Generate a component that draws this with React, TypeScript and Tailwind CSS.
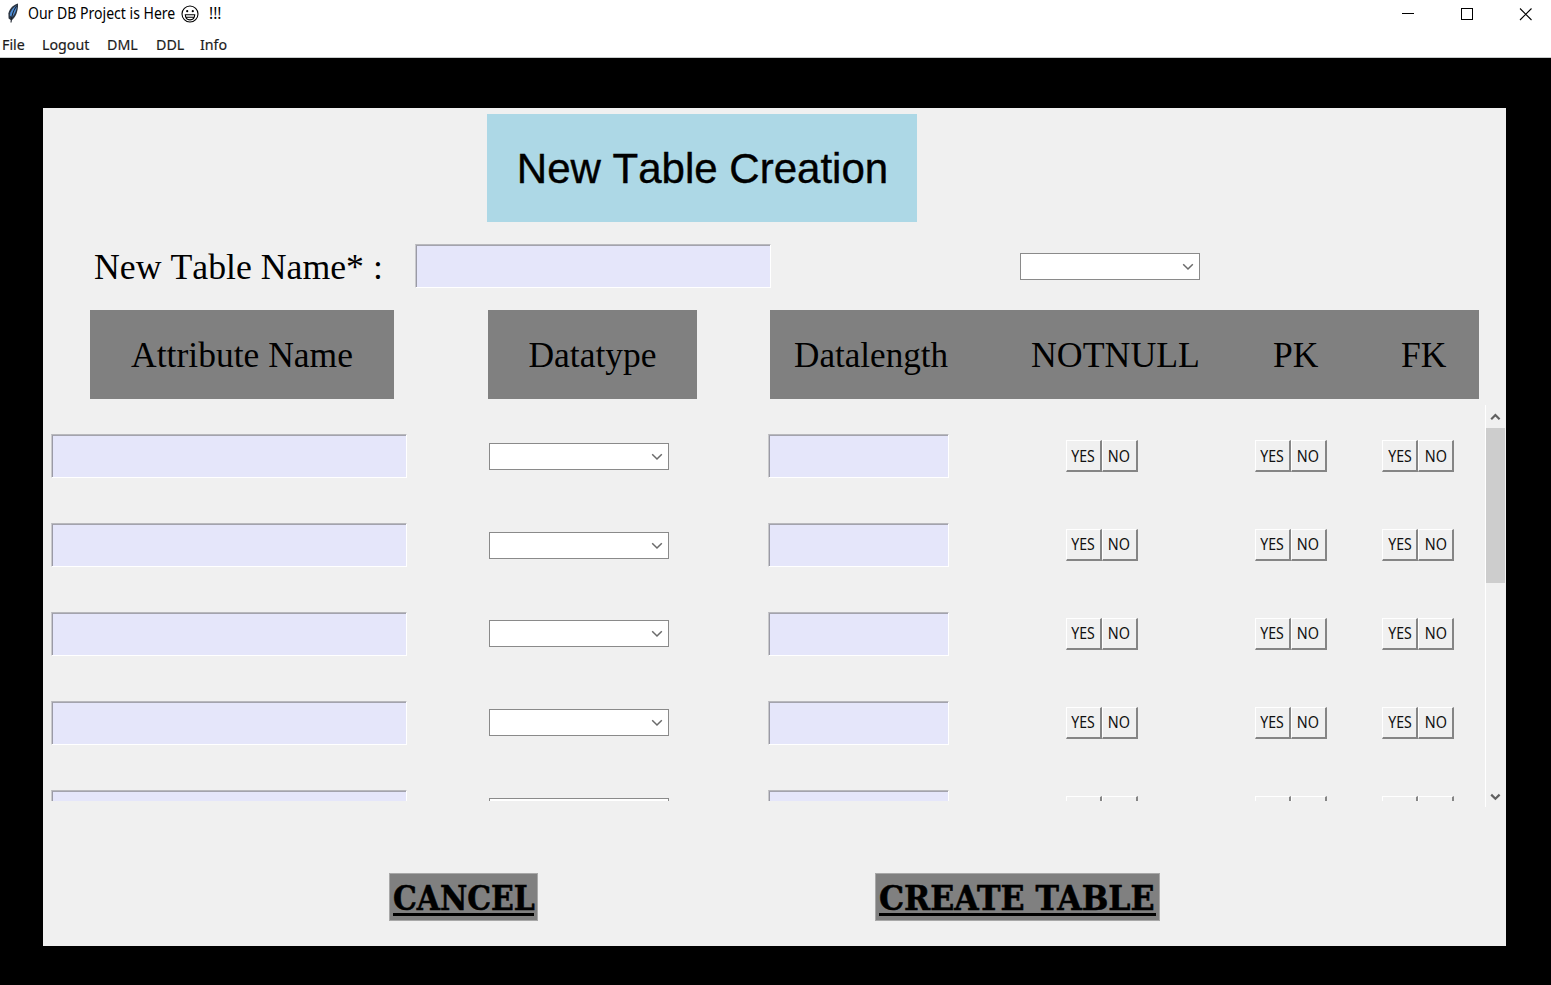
import React from "react";

function Feather() {
  return (
    <svg width="12" height="20" viewBox="0 0 12 20" className="shrink-0">
      <path d="M11 0.5C7 1.5 2.5 5 1.4 10.5L1.6 15.5L4.4 17.5C8.4 14.5 11.4 8.5 11 0.5Z" fill="#2b3440" />
      <path d="M9.8 2.5C6 4.5 3.2 8 2.8 12.5L5 14.2C8 11 9.8 7 9.8 2.5Z" fill="#4f8fd8" />
      <path d="M9.6 3C6.5 7 4.6 12 4 19.5" fill="none" stroke="#1c222c" strokeWidth="1.1" />
    </svg>
  );
}

function Grin() {
  return (
    <svg width="18" height="18" viewBox="0 0 18 18" fill="none" stroke="#000" strokeWidth="1.1" className="shrink-0">
      <circle cx="9" cy="9" r="8" />
      <path d="M4.3 9.8H13.7C13.6 13 11.7 14.9 9 14.9S4.4 13 4.3 9.8ZM5 12.2H13" strokeWidth="1.1" />
      <circle cx="6.2" cy="6.2" r="1.1" fill="#000" stroke="none" />
      <circle cx="11.8" cy="6.2" r="1.1" fill="#000" stroke="none" />
    </svg>
  );
}

function TitleBar() {
  return (
    <header className="flex h-7 items-center justify-between bg-white pl-[7px] pr-[19px]">
      <div className="flex items-center text-[15.5px] leading-7">
        <span className="-mt-[2px]">
          <Feather />
        </span>
        <span className="-mt-[2px] ml-[9px] w-[148px] whitespace-nowrap">
          <span className="inline-block origin-left scale-x-[0.905]">Our DB Project is Here</span>
        </span>
        <span className="ml-[5px]">
          <Grin />
        </span>
        <span className="-mt-[2px] ml-[10px]">!!!</span>
      </div>
      <div className="flex items-center gap-[46px]">
        <svg width="13" height="13" viewBox="0 0 13 13" className="block">
          <path d="M1 5.5H13" stroke="#000" />
        </svg>
        <svg width="13" height="13" viewBox="0 0 13 13" className="block">
          <rect x="1.5" y="0.5" width="11" height="11" fill="none" stroke="#000" />
        </svg>
        <svg width="13" height="13" viewBox="0 0 13 13" className="block">
          <path d="M1 0.5L12.5 12M12.5 0.5L1 12" stroke="#000" strokeWidth="1.1" />
        </svg>
      </div>
    </header>
  );
}

const menuText = "inline-block origin-left scale-x-[0.93]";

function MenuBar() {
  return (
    <nav className="flex h-[30px] border-b border-[#c8cccc] bg-white pl-[1.5px] text-[15.3px] leading-[33px] text-[#1c1c1c] [-webkit-text-stroke:0.2px_#1c1c1c]">
      <span className="w-10"><span className={menuText}>File</span></span>
      <span className="w-[65px]"><span className={menuText}>Logout</span></span>
      <span className="w-[49px]"><span className={menuText}>DML</span></span>
      <span className="w-[44.5px]"><span className={menuText}>DDL</span></span>
      <span className="w-10"><span className={menuText}>Info</span></span>
    </nav>
  );
}

function Entry({ className }: { className: string }) {
  return (
    <div className={`h-11 shrink-0 border border-t-[#b8b8bc] border-r-white border-b-white border-l-[#c9c9cc] bg-[#e5e6fa] ${className}`}>
      <div className="h-full border-t border-l border-t-[#a3a3ad] border-l-[#9a9aa6]" />
    </div>
  );
}

function Combo({ className = "" }: { className?: string }) {
  return (
    <div className={`flex h-[27px] w-[180px] shrink-0 items-center justify-end border border-[#8a8a8a] bg-white pr-[5px] ${className}`}>
      <svg width="12" height="8" viewBox="0 0 12 8" fill="none" stroke="#6a6a6a" strokeWidth="1.5" className="mt-px">
        <path d="M1.2 1.2L6 6L10.8 1.2" />
      </svg>
    </div>
  );
}

function Toggle({ label, inner }: { label: string; inner: string }) {
  return (
    <button className="flex h-8 w-9 items-center justify-center border-t border-r-2 border-b-2 border-l border-t-white border-r-[#858585] border-b-[#858585] border-l-white bg-[#f0f0f0] text-[15.5px] leading-none text-[#111]">
      <span className={`inline-block pt-px ${inner}`}>{label}</span>
    </button>
  );
}

function YesNo({ className, labelled }: { className: string; labelled: boolean }) {
  return (
    <div className={`flex w-[72px] shrink-0 ${className}`}>
      <Toggle label={labelled ? "YES" : ""} inner="scale-x-[0.91]" />
      <Toggle label={labelled ? "NO" : ""} inner="scale-x-[0.93]" />
    </div>
  );
}

function AttributeRow({ labelled }: { labelled: boolean }) {
  return (
    <div className="flex h-[88.8px] shrink-0 items-center">
      <Entry className="w-[356px]" />
      <Combo className="ml-[82px]" />
      <Entry className="ml-[99px] w-[180.5px]" />
      <YesNo className="ml-[117px]" labelled={labelled} />
      <YesNo className="ml-[117px]" labelled={labelled} />
      <YesNo className="ml-[55.5px]" labelled={labelled} />
    </div>
  );
}

function ScrollBar() {
  return (
    <div className="mr-px flex h-[402px] w-5 flex-col items-center border-l border-white bg-[#f0f0f0]">
      <svg width="12" height="23" viewBox="0 0 12 23" fill="none" stroke="#606060" strokeWidth="2.2">
        <path d="M1.2 14.2L5.4 10L9.6 14.2" />
      </svg>
      <div className="h-[155px] w-[19px] bg-[#cdcdcd]" />
      <svg width="12" height="23" viewBox="0 0 12 23" fill="none" stroke="#606060" strokeWidth="2.2" className="mt-auto">
        <path d="M1.2 10.6L5.4 14.8L9.6 10.6" />
      </svg>
    </div>
  );
}

const heading = "flex h-[89px] items-center bg-[#808080] pt-[3px]";

function ActionButton({ label, width, inner }: { label: string; width: string; inner: string }) {
  return (
    <button className={`h-12 border border-[#a8a8a8] bg-[#808080] px-[3px] ${width}`}>
      <span className="block h-[41px] -translate-y-[2px] border-b-[3px] border-black text-left font-['DejaVu_Serif',serif] text-[33px] leading-[48px] font-bold whitespace-nowrap text-black [-webkit-text-stroke:0.6px_black]">
        <span className={`inline-block origin-left ${inner}`}>{label}</span>
      </span>
    </button>
  );
}

export default function App() {
  return (
    <div className="flex h-[985px] w-[1551px] flex-col overflow-hidden bg-black font-['Noto_Sans',sans-serif] text-black">
      <TitleBar />
      <MenuBar />
      <main className="mt-[50px] ml-[43px] flex h-[838px] w-[1463px] flex-col bg-[#f0f0f0]">
        <h1 className="mt-[6px] ml-[444px] flex h-[108px] w-[430px] items-center justify-center bg-[#add8e6] font-['Liberation_Sans',sans-serif] text-[42.67px] [font-kerning:none] [-webkit-text-stroke:0.4px_black]">
          <span className="inline-block scale-x-[0.985]">New Table Creation</span>
        </h1>
        <div className="mt-[22px] flex h-11 items-center font-['Liberation_Serif',serif] text-[35.5px] [font-kerning:none]">
          <span className="ml-[51px] w-[321px] pt-[3px] whitespace-nowrap">
            <span className="inline-block origin-left scale-x-[1.007]">New Table Name* :</span>
          </span>
          <Entry className="w-[356px]" />
          <Combo className="ml-[249px]" />
        </div>
        <div className="mt-[22px] ml-[47px] flex font-['Liberation_Serif',serif] text-[35.5px] [font-kerning:none]">
          <div className={`${heading} w-[304px] justify-center`}>Attribute Name</div>
          <div className={`${heading} ml-[94px] w-[209px] justify-center`}>Datatype</div>
          <div className={`${heading} ml-[73px] w-[709px]`}>
            <span className="ml-6 w-[236.5px]"><span className="inline-block origin-left scale-x-[0.99]">Datalength</span></span>
            <span className="w-[242.5px]"><span className="inline-block origin-left scale-x-[1.008]">NOTNULL</span></span>
            <span className="w-[128px]">PK</span>
            <span>FK</span>
          </div>
        </div>
        <div className="mt-[6px] flex h-[402px] justify-between">
          <div className="ml-2 flex h-[396px] w-[1420px] flex-col overflow-hidden pt-[7px]">
            {[0, 1, 2, 3, 4].map((row) => (
              <AttributeRow key={row} labelled={row < 4} />
            ))}
          </div>
          <ScrollBar />
        </div>
        <div className="mt-[66px] ml-[346px] flex gap-[337px]">
          <ActionButton label="CANCEL" width="w-[149px]" inner="scale-x-[0.905]" />
          <ActionButton label="CREATE TABLE" width="w-[285px]" inner="scale-x-[0.955]" />
        </div>
      </main>
    </div>
  );
}
